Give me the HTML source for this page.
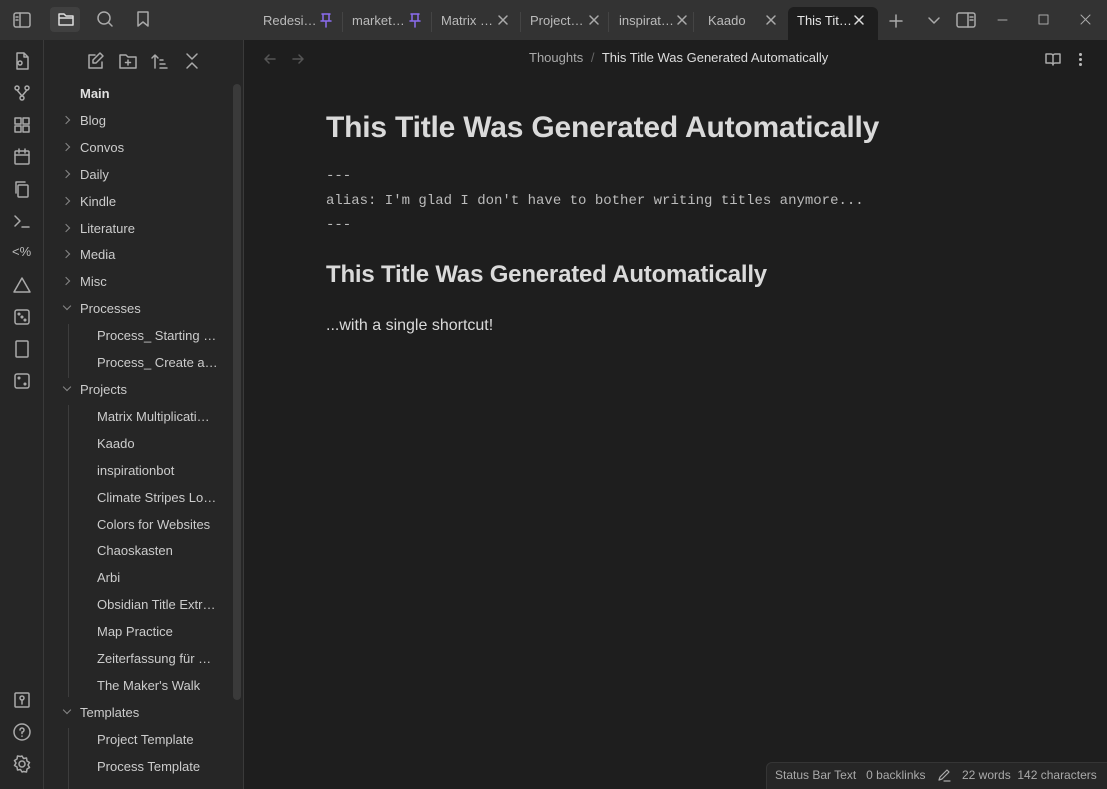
<!DOCTYPE html>
<html style="width:1107px;height:789px;overflow:hidden"><head><meta charset="utf-8"><style>
*{margin:0;padding:0;box-sizing:border-box}
body{width:1107px;height:789px;background:#1e1e1e;font-family:"Liberation Sans",sans-serif;color:#dadada;overflow:hidden;position:relative;font-size:13px}
.top{position:absolute;left:0;top:0;width:1107px;height:40px;background:#333}
.ribbon{position:absolute;left:0;top:40px;width:44px;height:749px;background:#262626;border-right:1px solid #3a3a3a}
.side{position:absolute;left:44px;top:40px;width:200px;height:749px;background:#262626;border-right:1px solid #3a3a3a}
svg{position:absolute;fill:none;stroke:#aaa;stroke-width:1.5;stroke-linecap:round;stroke-linejoin:round}
.tab{position:absolute;top:0;height:40px;line-height:42px;font-size:13px;color:#bbb}
.sep{position:absolute;top:12px;width:1px;height:20px;background:#444}
.row{position:absolute;font-size:13px;color:#ccc;white-space:nowrap}
.chev{position:absolute;width:6px;height:6px;border-right:1.3px solid #888;border-bottom:1.3px solid #888}
.guide{position:absolute;left:68px;width:1px;background:#3d3d3d}
</style></head><body>
<div class="top"></div>
<svg style="left:12px;top:11px" width="20" height="18" viewBox="0 0 20 18"><rect x="2" y="2" width="16" height="14" rx="2"/><line x1="8" y1="2" x2="8" y2="16"/><line x1="4" y1="6" x2="6" y2="6"/><line x1="4" y1="9" x2="6" y2="9"/></svg>
<div style="position:absolute;left:50px;top:7px;width:30px;height:25px;background:#404040;border-radius:4px"></div>
<svg style="left:57px;top:10px" width="18" height="18" viewBox="0 0 18 18"><path d="M2 4h5l2 2h7v9H2z M2 8h14" stroke="#ddd"/></svg>
<svg style="left:96px;top:10px" width="18" height="18" viewBox="0 0 18 18"><circle cx="8" cy="8" r="6"/><line x1="12.5" y1="12.5" x2="16" y2="16"/></svg>
<svg style="left:134px;top:10px" width="18" height="18" viewBox="0 0 18 18"><path d="M4 2h10v14l-5-4-5 4z"/></svg>
<div class="tab" style="left:263px">Redesi…</div><svg style="left:318px;top:12px" width="16" height="16" viewBox="0 0 16 16"><path d="M4 2h8M5 2v6M11 2v6M3 9h10M8 9v6" stroke="#8b6cef"/></svg>
<div class="sep" style="left:342px"></div>
<div class="tab" style="left:352px">market…</div><svg style="left:407px;top:12px" width="16" height="16" viewBox="0 0 16 16"><path d="M4 2h8M5 2v6M11 2v6M3 9h10M8 9v6" stroke="#8b6cef"/></svg>
<div class="sep" style="left:431px"></div>
<div class="tab" style="left:441px">Matrix …</div><svg style="left:497px;top:14px" width="12" height="12" viewBox="0 0 12 12"><path d="M2 2l8 8M10 2l-8 8"/></svg>
<div class="sep" style="left:520px"></div>
<div class="tab" style="left:530px">Project…</div><svg style="left:588px;top:14px" width="12" height="12" viewBox="0 0 12 12"><path d="M2 2l8 8M10 2l-8 8"/></svg>
<div class="sep" style="left:608px"></div>
<div class="tab" style="left:619px">inspirat…</div><svg style="left:676px;top:14px" width="12" height="12" viewBox="0 0 12 12"><path d="M2 2l8 8M10 2l-8 8"/></svg>
<div class="sep" style="left:693px"></div>
<div class="tab" style="left:708px">Kaado</div><svg style="left:765px;top:14px" width="12" height="12" viewBox="0 0 12 12"><path d="M2 2l8 8M10 2l-8 8"/></svg>
<div style="position:absolute;left:788px;top:7px;width:90px;height:33px;background:#1e1e1e;border-radius:6px 6px 0 0"></div>
<div class="tab" style="left:797px;color:#e6e6e6">This Tit…</div><svg style="left:853px;top:14px" width="12" height="12" viewBox="0 0 12 12"><path d="M2 2l8 8M10 2l-8 8" stroke="#ddd"/></svg>
<svg style="left:888px;top:13px" width="16" height="16" viewBox="0 0 16 16"><path d="M8 2v12M2 8h12"/></svg>
<svg style="left:927px;top:15px" width="14" height="10" viewBox="0 0 14 10"><path d="M2 3l5 5 5-5"/></svg>
<svg style="left:955px;top:11px" width="22" height="18" viewBox="0 0 22 18"><rect x="2" y="2" width="18" height="14" rx="2"/><line x1="13" y1="2" x2="13" y2="16"/><path d="M15 6h3M15 9h3"/></svg>
<svg style="left:996px;top:13px" width="14" height="14" viewBox="0 0 14 14"><path d="M2 7h9" stroke-width="1"/></svg>
<svg style="left:1037px;top:13px" width="14" height="14" viewBox="0 0 14 14"><rect x="2" y="2" width="9" height="9" stroke-width="1"/></svg>
<svg style="left:1079px;top:13px" width="14" height="14" viewBox="0 0 14 14"><path d="M2 2l9 9M11 2l-9 9" stroke-width="1"/></svg>

<div class="ribbon"></div>
<svg style="left:12px;top:51px" width="20" height="20" viewBox="0 0 20 20"><path d="M5 2h7l4 4v12H5z M12 2v4h4"/><circle cx="8" cy="12" r="2"/></svg>
<svg style="left:12px;top:83px" width="20" height="20" viewBox="0 0 20 20"><circle cx="5" cy="5" r="2"/><circle cx="15" cy="5" r="2"/><circle cx="10" cy="15" r="2"/><path d="M5 7l5 6M15 7l-5 6"/></svg>
<svg style="left:12px;top:115px" width="20" height="20" viewBox="0 0 20 20"><rect x="3" y="3" width="6" height="6"/><rect x="11" y="3" width="6" height="6"/><rect x="3" y="11" width="6" height="6"/><rect x="11" y="11" width="6" height="6"/></svg>
<svg style="left:12px;top:147px" width="20" height="20" viewBox="0 0 20 20"><rect x="3" y="4" width="14" height="13" rx="1"/><path d="M3 8h14M7 2v4M13 2v4"/></svg>
<svg style="left:12px;top:179px" width="20" height="20" viewBox="0 0 20 20"><rect x="6" y="6" width="10" height="12" rx="1"/><path d="M4 14V3h9"/></svg>
<svg style="left:12px;top:211px" width="20" height="20" viewBox="0 0 20 20"><path d="M3 5l5 5-5 5M10 16h7"/></svg>
<div style="position:absolute;left:12px;top:244px;font-size:13px;color:#bbb">&lt;%</div>
<svg style="left:12px;top:275px" width="20" height="20" viewBox="0 0 20 20"><path d="M10 3l8 14H2z"/></svg>
<svg style="left:12px;top:307px" width="20" height="20" viewBox="0 0 20 20"><rect x="3" y="3" width="14" height="14" rx="2"/><circle cx="7" cy="7" r=".8"/><circle cx="13" cy="13" r=".8"/><circle cx="10" cy="10" r=".8"/></svg>
<svg style="left:12px;top:339px" width="20" height="20" viewBox="0 0 20 20"><rect x="4" y="2" width="12" height="16" rx="1"/></svg>
<svg style="left:12px;top:371px" width="20" height="20" viewBox="0 0 20 20"><rect x="3" y="3" width="14" height="14" rx="2"/><circle cx="7" cy="7" r=".8"/><circle cx="13" cy="13" r=".8"/></svg>
<svg style="left:12px;top:690px" width="20" height="20" viewBox="0 0 20 20"><rect x="3" y="3" width="14" height="14" rx="1"/><circle cx="10" cy="8" r="2"/><path d="M10 10v4"/></svg>
<svg style="left:12px;top:722px" width="20" height="20" viewBox="0 0 20 20"><circle cx="10" cy="10" r="8"/><path d="M8 8a2 2 0 1 1 2 2v1.5M10 14v.2"/></svg>
<svg style="left:12px;top:754px" width="20" height="20" viewBox="0 0 20 20"><circle cx="10" cy="10" r="3"/><path d="M10 2l1.5 2.5 3-.5.5 3 2.5 1.5-1.5 2.5 1.5 2.5-2.5 1.5-.5 3-3-.5L10 18l-1.5-2.5-3 .5-.5-3L2.5 11.5 4 9 2.5 6.5 5 5l.5-3 3 .5z"/></svg>

<div class="side"></div>
<svg style="left:86px;top:51px" width="20" height="20" viewBox="0 0 20 20"><path d="M16 11v6H3V4h6M14 2l3 3-7 7H7V9z"/></svg>
<svg style="left:118px;top:51px" width="20" height="20" viewBox="0 0 20 20"><path d="M2 4h6l2 2h8v11H2z M10 9v5M7.5 11.5h5"/></svg>
<svg style="left:150px;top:51px" width="20" height="20" viewBox="0 0 20 20"><path d="M5 17V4M2 7l3-3 3 3M10 9h3M10 13h5M10 17h7"/></svg>
<svg style="left:182px;top:51px" width="20" height="20" viewBox="0 0 20 20"><path d="M5 3l5 5 5-5M5 17l5-5 5 5"/></svg>
<div style="position:absolute;left:233px;top:84px;width:8px;height:616px;background:#3a3a3a;border-radius:4px"></div>
<div class="row" style="left:80px;top:86px;font-weight:bold;color:#e0e0e0">Main</div>
<div class="guide" style="top:324px;height:54px"></div>
<div class="guide" style="top:405px;height:292px"></div>
<div class="guide" style="top:728px;height:61px"></div>
<div class="row" style="left:80px;top:113px">Blog</div><div class="chev" style="left:63px;top:117px;transform:rotate(-45deg)"></div>
<div class="row" style="left:80px;top:140px">Convos</div><div class="chev" style="left:63px;top:144px;transform:rotate(-45deg)"></div>
<div class="row" style="left:80px;top:167px">Daily</div><div class="chev" style="left:63px;top:171px;transform:rotate(-45deg)"></div>
<div class="row" style="left:80px;top:194px">Kindle</div><div class="chev" style="left:63px;top:198px;transform:rotate(-45deg)"></div>
<div class="row" style="left:80px;top:221px">Literature</div><div class="chev" style="left:63px;top:225px;transform:rotate(-45deg)"></div>
<div class="row" style="left:80px;top:247px">Media</div><div class="chev" style="left:63px;top:251px;transform:rotate(-45deg)"></div>
<div class="row" style="left:80px;top:274px">Misc</div><div class="chev" style="left:63px;top:278px;transform:rotate(-45deg)"></div>
<div class="row" style="left:80px;top:301px">Processes</div><div class="chev" style="left:64px;top:303px;transform:rotate(45deg)"></div>
<div class="row" style="left:97px;top:328px">Process_ Starting …</div>
<div class="row" style="left:97px;top:355px">Process_ Create a…</div>
<div class="row" style="left:80px;top:382px">Projects</div><div class="chev" style="left:64px;top:384px;transform:rotate(45deg)"></div>
<div class="row" style="left:97px;top:409px">Matrix Multiplicati…</div>
<div class="row" style="left:97px;top:436px">Kaado</div>
<div class="row" style="left:97px;top:463px">inspirationbot</div>
<div class="row" style="left:97px;top:490px">Climate Stripes Lo…</div>
<div class="row" style="left:97px;top:517px">Colors for Websites</div>
<div class="row" style="left:97px;top:543px">Chaoskasten</div>
<div class="row" style="left:97px;top:570px">Arbi</div>
<div class="row" style="left:97px;top:597px">Obsidian Title Extr…</div>
<div class="row" style="left:97px;top:624px">Map Practice</div>
<div class="row" style="left:97px;top:651px">Zeiterfassung für …</div>
<div class="row" style="left:97px;top:678px">The Maker's Walk</div>
<div class="row" style="left:80px;top:705px">Templates</div><div class="chev" style="left:64px;top:707px;transform:rotate(45deg)"></div>
<div class="row" style="left:97px;top:732px">Project Template</div>
<div class="row" style="left:97px;top:759px">Process Template</div>

<svg style="left:262px;top:51px" width="16" height="16" viewBox="0 0 16 16"><path d="M13 8H3M7 4L3 8l4 4" stroke="#555"/></svg>
<svg style="left:290px;top:51px" width="16" height="16" viewBox="0 0 16 16"><path d="M3 8h10M9 4l4 4-4 4" stroke="#555"/></svg>
<div class="row" style="left:529px;top:50px;color:#aaa">Thoughts <span style="color:#666;margin:0 4px">/</span> <span style="color:#ddd">This Title Was Generated Automatically</span></div>
<svg style="left:1044px;top:50px" width="18" height="18" viewBox="0 0 18 18"><path d="M2 4h5a2 2 0 0 1 2 2v9a2 2 0 0 0-2-2H2zM16 4h-5a2 2 0 0 0-2 2v9a2 2 0 0 1 2-2h5z"/></svg>
<div style="position:absolute;left:1079px;top:53px;width:3px;height:3px;background:#bbb;border-radius:50%;box-shadow:0 5px 0 #bbb,0 10px 0 #bbb"></div>
<div style="position:absolute;left:326px;top:111px;font-size:30px;font-weight:bold;color:#dadada;letter-spacing:-0.2px;white-space:nowrap">This Title Was Generated Automatically</div>
<div style="position:absolute;left:326px;top:164px;font-family:'Liberation Mono',monospace;font-size:14px;line-height:24.5px;color:#bbb">---<br>alias: I'm glad I don't have to bother writing titles anymore...<br>---</div>
<div style="position:absolute;left:326px;top:261px;font-size:24px;font-weight:bold;color:#dadada;letter-spacing:-0.2px;white-space:nowrap">This Title Was Generated Automatically</div>
<div style="position:absolute;left:326px;top:317px;font-size:16px;color:#dadada">...with a single shortcut!</div>
<div style="position:absolute;left:766px;top:762px;width:345px;height:30px;background:#262626;border:1px solid #353535;border-radius:6px 0 0 0"></div>
<div class="row" style="left:775px;top:768px;font-size:12px;color:#aaa">Status Bar Text &nbsp;&nbsp;0 backlinks</div>
<svg style="left:936px;top:767px" width="16" height="16" viewBox="0 0 16 16"><path d="M3 13l1-3 7-7 2 2-7 7zM8 14h6" stroke-width="1.2"/></svg>
<div class="row" style="left:962px;top:768px;font-size:12px;color:#aaa">22 words &nbsp;142 characters</div>
</body></html>
